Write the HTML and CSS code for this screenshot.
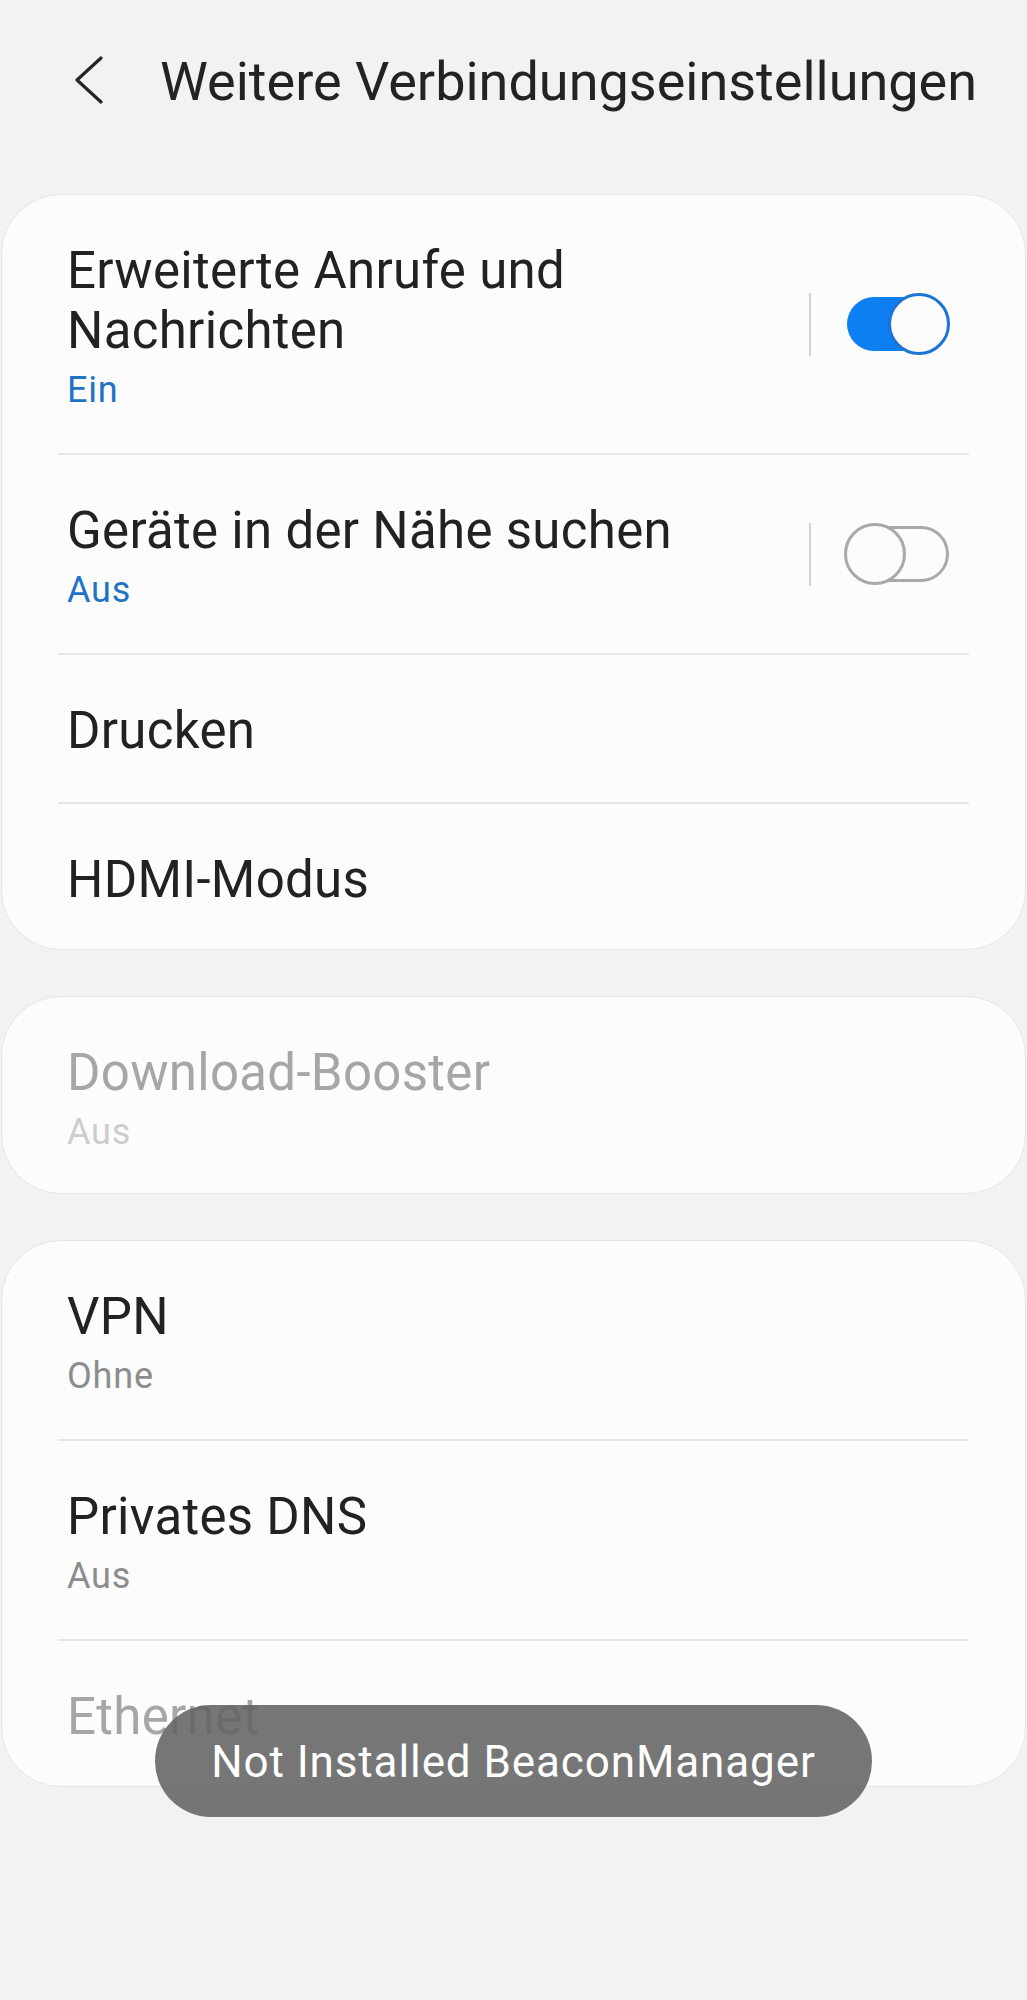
FILE: index.html
```html
<!DOCTYPE html>
<html lang="de">
<head>
  <meta charset="UTF-8" />
  <meta name="viewport" content="width=device-width, initial-scale=1.0"/>
  <title>Weitere Verbindungseinstellungen</title>
  <link rel="stylesheet" href="styles.css">
</head>
<body>
  <header class="appbar">
    <button class="back" aria-label="Zurück">
      <svg width="30" height="48" viewBox="0 0 30 48">
        <polyline points="27,2 3,24 27,46" fill="none" stroke="#252525" stroke-width="3.2" stroke-linecap="round" stroke-linejoin="round"/>
      </svg>
    </button>
    <h1>Weitere Verbindungseinstellungen</h1>
  </header>

  <main class="list">
    <section class="card">
      <div class="row">
        <div class="text">
          <div class="title">Erweiterte Anrufe und Nachrichten</div>
          <div class="sub accent">Ein</div>
        </div>
        <div class="toggle">
          <span class="sep"></span>
          <span class="switch is-on"><span class="track"></span><span class="thumb"></span></span>
        </div>
      </div>
      <div class="row">
        <div class="text">
          <div class="title">Geräte in der Nähe suchen</div>
          <div class="sub accent">Aus</div>
        </div>
        <div class="toggle">
          <span class="sep"></span>
          <span class="switch"><span class="track"></span><span class="thumb"></span></span>
        </div>
      </div>
      <div class="row">
        <div class="text"><div class="title">Drucken</div></div>
      </div>
      <div class="row">
        <div class="text"><div class="title">HDMI-Modus</div></div>
      </div>
    </section>

    <section class="card">
      <div class="row disabled">
        <div class="text">
          <div class="title">Download-Booster</div>
          <div class="sub">Aus</div>
        </div>
      </div>
    </section>

    <section class="card">
      <div class="row">
        <div class="text">
          <div class="title">VPN</div>
          <div class="sub">Ohne</div>
        </div>
      </div>
      <div class="row">
        <div class="text">
          <div class="title">Privates DNS</div>
          <div class="sub">Aus</div>
        </div>
      </div>
      <div class="row disabled">
        <div class="text"><div class="title">Ethernet</div></div>
      </div>
    </section>
  </main>

  <div class="toast">Not Installed BeaconManager</div>
</body>
</html>
```

FILE: styles.css
```css
body {
  margin: 0;
  padding: 0;
  min-height: 2000px;
  background: #f2f2f2;
  font-family: Roboto, "Noto Sans", sans-serif;
  color: #222;
  position: relative;
}

/* top bar */
.appbar {
  display: flex;
  align-items: flex-start;
  height: 66px;
  padding: 49px 0 0 74px;
}

.back {
  border: none;
  background: none;
  padding: 0;
  margin: 7px 56px 0 0;
  width: 30px;
  height: 48px;
}

.appbar h1 {
  margin: 0;
  font-size: 54px;
  font-weight: 400;
  line-height: 66px;
  color: #232323;
  white-space: nowrap;
}

/* cards */
.list {
  margin-top: 79px;
  display: flex;
  flex-direction: column;
  gap: 45px;
}

.card {
  margin: 0 1px;
  padding: 0 56px;
  background: #fcfcfc;
  border: 1px solid #e6e6e6;
  border-radius: 60px;
}

.card + .card {
  margin-top: 1px;
}

.row {
  display: flex;
  align-items: center;
  padding: 46px 19px 41px 9px;
  border-bottom: 2px solid #e7e7e7;
}

.row:last-child {
  border-bottom: none;
  padding-bottom: 39px;
}

.text {
  flex: 1;
  margin-right: 40px;
}

.title {
  font-size: 51px;
  line-height: 60px;
  letter-spacing: 0.3px;
  color: #222;
}

.sub {
  margin-top: 7px;
  font-size: 36px;
  line-height: 44px;
  letter-spacing: 0.8px;
  color: #8c8c8c;
}

.sub.accent {
  color: #1f73c6;
}

.disabled .title {
  color: #a6a6a6;
}

.disabled .sub {
  color: #cdcdcd;
}

/* switches */
.toggle {
  display: flex;
  align-items: center;
  margin-top: -5px;
}

.sep {
  width: 2px;
  height: 63px;
  background: #d2d2d2;
  margin-right: 33px;
}

.switch {
  position: relative;
  width: 106px;
  height: 62px;
}

.switch .track {
  position: absolute;
  left: 3px;
  right: 1px;
  top: 3px;
  height: 50px;
  border: 3px solid #a9a9a9;
  border-radius: 28px;
}

.switch .thumb {
  position: absolute;
  left: 0;
  top: 0;
  width: 56px;
  height: 56px;
  border: 3px solid #a9a9a9;
  border-radius: 50%;
  background: #fcfcfc;
}

.switch.is-on .track {
  top: 4px;
  height: 54px;
  border: none;
  background: #0d7ff2;
  border-radius: 27px;
}

.switch.is-on .thumb {
  left: auto;
  right: 0;
  border-color: #1b74d6;
}

/* toast */
.toast {
  position: absolute;
  top: 1705px;
  left: 0;
  right: 0;
  margin: 0 auto;
  width: 717px;
  height: 112px;
  border-radius: 56px;
  background: rgba(99, 99, 99, 0.88);
  color: #fff;
  font-size: 44px;
  letter-spacing: 0.9px;
  display: flex;
  align-items: center;
  justify-content: center;
  padding-top: 2px;
  box-sizing: border-box;
}
```
